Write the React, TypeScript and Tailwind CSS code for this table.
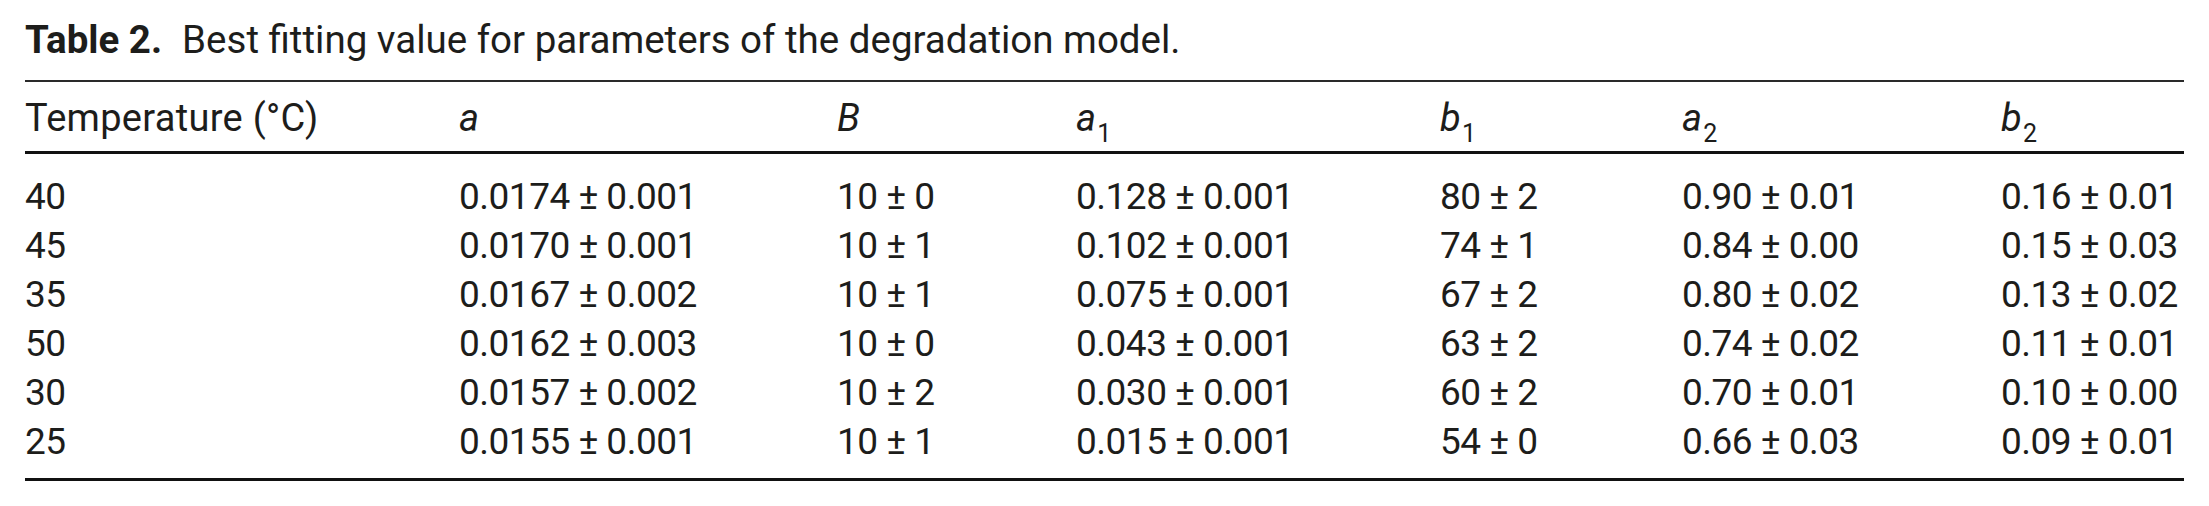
const font = { fontFamily: "Roboto, 'Liberation Sans', sans-serif" }

type Row = string[]

const rows: Row[] = [
  ["40", "0.0174 ± 0.001", "10 ± 0", "0.128 ± 0.001", "80 ± 2", "0.90 ± 0.01", "0.16 ± 0.01"],
  ["45", "0.0170 ± 0.001", "10 ± 1", "0.102 ± 0.001", "74 ± 1", "0.84 ± 0.00", "0.15 ± 0.03"],
  ["35", "0.0167 ± 0.002", "10 ± 1", "0.075 ± 0.001", "67 ± 2", "0.80 ± 0.02", "0.13 ± 0.02"],
  ["50", "0.0162 ± 0.003", "10 ± 0", "0.043 ± 0.001", "63 ± 2", "0.74 ± 0.02", "0.11 ± 0.01"],
  ["30", "0.0157 ± 0.002", "10 ± 2", "0.030 ± 0.001", "60 ± 2", "0.70 ± 0.01", "0.10 ± 0.00"],
  ["25", "0.0155 ± 0.001", "10 ± 1", "0.015 ± 0.001", "54 ± 0", "0.66 ± 0.03", "0.09 ± 0.01"],
]

const cols = "grid grid-cols-[434px_378px_239px_364px_242px_319px_1fr]"

// italic symbol with optional subscript
const Sym = ({ s, sub }: { s: string; sub?: string }) => (
  <span>
    <span className="italic">{s}</span>
    {sub && <span className="text-[25px] relative top-[11px] ml-[1px]">{sub}</span>}
  </span>
)

export default function App() {
  return (
    <div className="w-[2209px] h-[506px] bg-white text-[#1d1d1b] px-[25px] pt-[15px]" style={font}>
      {/* Caption */}
      <div className="text-[38.5px] leading-[49px] whitespace-nowrap">
        <span className="font-bold">Table 2.</span>
        <span className="ml-[20px]">Best fitting value for parameters of the degradation model.</span>
      </div>

      <div className="mt-[16px] border-t-2 border-[#2a2a2a]" />

      {/* Header */}
      <div className={`${cols} h-[72px] items-center pt-[4px] text-[38px] tracking-[0.3px] border-b-[3px] border-[#111]`}>
        <span>Temperature (°C)</span>
        <Sym s="a" />
        <Sym s="B" />
        <Sym s="a" sub="1" />
        <Sym s="b" sub="1" />
        <Sym s="a" sub="2" />
        <Sym s="b" sub="2" />
      </div>

      {/* Body */}
      <div className="pt-[15px] pb-[15px] border-b-[3px] border-[#111]">
        {rows.map((r, i) => (
          <div key={i} className={`${cols} h-[49px] items-center text-[37px] tracking-[-0.5px] whitespace-nowrap`}>
            {r.map((c, j) => (
              <span key={j}>{c}</span>
            ))}
          </div>
        ))}
      </div>
    </div>
  )
}
